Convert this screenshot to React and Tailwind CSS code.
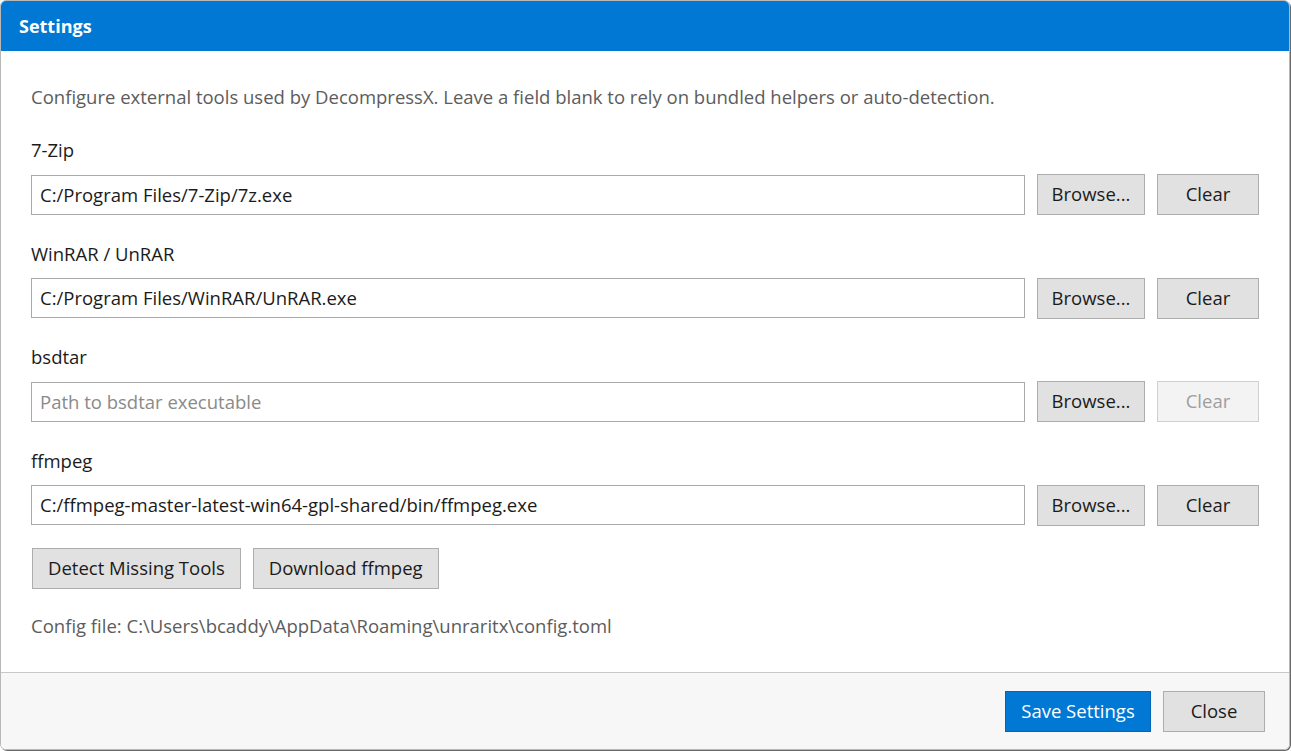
import React from 'react';

const tools = [
  { label: '7-Zip', value: 'C:/Program Files/7-Zip/7z.exe' },
  { label: 'WinRAR / UnRAR', value: 'C:/Program Files/WinRAR/UnRAR.exe' },
  { label: 'bsdtar', value: '', placeholder: 'Path to bsdtar executable' },
  { label: 'ffmpeg', value: 'C:/ffmpeg-master-latest-win64-gpl-shared/bin/ffmpeg.exe' },
];

const btn = 'h-[41px] border border-[#adadad] bg-[#e1e1e1] text-[#1b1b1b] text-[18.5px] leading-none';

const ToolRow = ({ tool }) => (
  <div className="flex flex-col">
    <div className="h-[24px] flex items-center text-[18.5px] text-[#1b1b1b]">{tool.label}</div>
    <div className="flex items-center mt-[12px]">
      <div className="w-[994px] h-[40px] border border-[#a9a9a9] bg-white flex items-center px-[8px] text-[18.5px]">
        {tool.value ? (
          <span className="text-[#1b1b1b]">{tool.value}</span>
        ) : (
          <span className="text-[#8a8a8a]">{tool.placeholder}</span>
        )}
      </div>
      <button className={`${btn} w-[108px] ml-[12px]`}>Browse...</button>
      {tool.value ? (
        <button className={`${btn} w-[102px] ml-[12px]`}>Clear</button>
      ) : (
        <button className="h-[41px] w-[102px] ml-[12px] border border-[#cfcfcf] bg-[#f3f3f3] text-[#9e9e9e] text-[18.5px] leading-none">
          Clear
        </button>
      )}
    </div>
  </div>
);

export default function App() {
  return (
    <div className="w-[1291px] h-[751px] bg-white" style={{ fontFamily: '"Open Sans", "Noto Sans", sans-serif' }}>
      <div className="w-[1290px] h-[750px] rounded-[6px] border border-[#b8b8b8] shadow-[1px_1px_0_#6a6a6a] overflow-hidden flex flex-col">
        <div className="h-[50px] bg-[#0078d4] flex items-center px-[18px] shrink-0">
          <span className="text-white text-[18px] font-bold">Settings</span>
        </div>
        <div className="flex-1 flex flex-col pl-[30px] pt-[34px]">
          <div className="h-[24px] flex items-center text-[18.5px] text-[#5c5c5c]">
            Configure external tools used by DecompressX. Leave a field blank to rely on bundled helpers or auto-detection.
          </div>
          <div className="flex flex-col gap-[26.5px] mt-[29px]">
            {tools.map((t) => (
              <ToolRow key={t.label} tool={t} />
            ))}
          </div>
          <div className="flex gap-[12px] mt-[22px] ml-[1px]">
            <button className={`${btn} px-[15px]`}>Detect Missing Tools</button>
            <button className={`${btn} px-[15px]`}>Download ffmpeg</button>
          </div>
          <div className="h-[24px] flex items-center mt-[25px] text-[18.5px] text-[#5c5c5c]">
            Config file: C:\Users\bcaddy\AppData\Roaming\unraritx\config.toml
          </div>
        </div>
        <div className="h-[77px] shrink-0 border-t border-[#c8c8c8] bg-[#f7f7f7] flex items-center justify-end pr-[24px] gap-[12px]">
          <button className="h-[41px] w-[146px] bg-[#0078d4] border border-[#0067b8] text-white text-[18.5px] leading-none">
            Save Settings
          </button>
          <button className={`${btn} w-[102px]`}>Close</button>
        </div>
      </div>
    </div>
  );
}
